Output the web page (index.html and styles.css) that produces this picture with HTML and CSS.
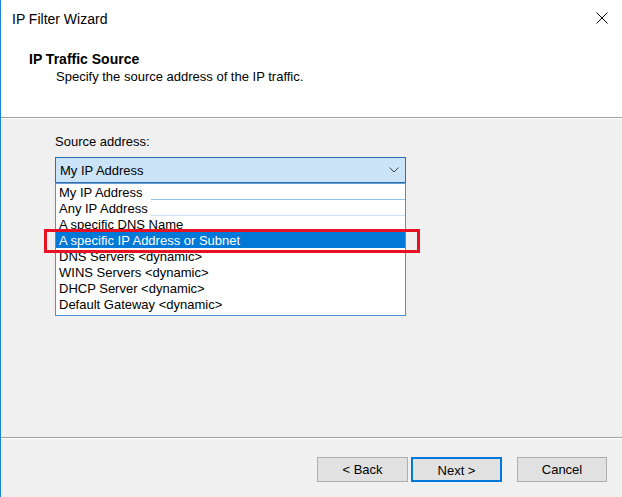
FILE: index.html
```html
<!DOCTYPE html>
<html lang="en">
<head>
<meta charset="utf-8">
<title>IP Filter Wizard</title>
<link rel="stylesheet" href="styles.css">
</head>
<body>
<div class="window">
  <header class="top">
    <div class="titlebar">
      <span class="title">IP Filter Wizard</span>
      <svg class="close" width="12" height="12" viewBox="0 0 12 12" aria-hidden="true">
        <path d="M0.5 0.5 L11.5 11.5 M11.5 0.5 L0.5 11.5" stroke="#000" stroke-width="1" fill="none"/>
      </svg>
    </div>
    <h1 class="heading">IP Traffic Source</h1>
    <p class="sub">Specify the source address of the IP traffic.</p>
  </header>
  <main class="content">
    <div class="label">Source address:</div>
    <div class="combo-wrap">
      <div class="combo">
        <span class="combo-text">My IP Address</span>
        <svg class="chevron" width="10" height="6" viewBox="0 0 10 6" aria-hidden="true">
          <path d="M0.5 0.5 L5 5 L9.5 0.5" stroke="#404040" stroke-width="1" fill="none"/>
        </svg>
      </div>
      <ul class="list">
        <li class="row line-a">My IP Address</li>
        <li class="row line-b">Any IP Address</li>
        <li class="row">A specific DNS Name</li>
        <li class="row selected">A specific IP Address or Subnet</li>
        <li class="row">DNS Servers &lt;dynamic&gt;</li>
        <li class="row">WINS Servers &lt;dynamic&gt;</li>
        <li class="row">DHCP Server &lt;dynamic&gt;</li>
        <li class="row">Default Gateway &lt;dynamic&gt;</li>
      </ul>
      <div class="callout"></div>
    </div>
  </main>
  <footer class="footer">
    <button class="btn btn-back">&lt; Back</button>
    <button class="btn btn-next">Next &gt;</button>
    <button class="btn btn-cancel">Cancel</button>
  </footer>
</div>
</body>
</html>
```
FILE: styles.css
```css
* { box-sizing: border-box; }

html, body {
  margin: 0;
  padding: 0;
  background: #f0f0f0;
}

body {
  font-family: "Liberation Sans", Arial, sans-serif;
  font-size: 13px;
  color: #000;
}

.window {
  width: 622px;
  height: 497px;
  border-left: 1px solid #1883d7;
  display: flex;
  flex-direction: column;
  background: #f0f0f0;
}

.top {
  height: 118px;
  background: #fff;
  border-bottom: 1px solid #a0a0a0;
  flex: none;
}

.titlebar {
  display: flex;
  justify-content: space-between;
  align-items: flex-start;
  padding: 10px 14px 0 11px;
  height: 28px;
}

.title {
  font-size: 14px;
  line-height: 18px;
}

.close {
  margin-top: 2px;
  display: block;
}

.heading {
  margin: 22px 0 0 28px;
  font-size: 14px;
  line-height: 18px;
  font-weight: bold;
}

.sub {
  margin: 1px 0 0 55px;
  font-size: 13px;
  line-height: 16px;
}

.content {
  flex: 1;
  border-top: 1px solid #fff;
  padding: 15px 0 0 54px;
}

.label {
  line-height: 16px;
}

.combo-wrap {
  position: relative;
  width: 351px;
  margin-top: 7px;
}

.combo {
  height: 26px;
  border: 1px solid #2f6db5;
  background: #cce4f7;
  display: flex;
  align-items: center;
  justify-content: space-between;
  padding: 0 6px 0 4px;
}

.combo-text {
  line-height: 16px;
  padding-top: 1px;
}

.chevron {
  display: block;
}

.list {
  list-style: none;
  margin: 0;
  padding: 0 0 3px 0;
  background: #fff;
  border: 1px solid #4f8fd6;
  border-top-color: #6a9bd0;
}

.row {
  position: relative;
  height: 16px;
  line-height: 16px;
  padding: 1px 0 0 3px;
  white-space: nowrap;
}

.row.selected {
  background: #0078d7;
  color: #fff;
}

.line-a::after,
.line-b::after {
  content: "";
  position: absolute;
  left: 95px;
  right: 0;
  bottom: 0;
  height: 1px;
}

.line-a::after { background: #8ec3f0; }
.line-b::after { background: #c8e0f8; }

.callout {
  position: absolute;
  left: -11px;
  top: 72px;
  width: 376px;
  height: 24px;
  border: 3px solid #e81123;
  pointer-events: none;
}

.footer {
  flex: none;
  height: 60px;
  border-top: 1px solid #a0a0a0;
  box-shadow: inset 0 1px 0 #fff;
  display: flex;
  justify-content: flex-end;
  align-items: flex-start;
  padding: 19px 15px 0 0;
}

.btn {
  font-family: "Liberation Sans", Arial, sans-serif;
  font-size: 13px;
  color: #000;
  height: 25px;
  width: 91px;
  background: #e1e1e1;
  border: 1px solid #adadad;
  padding: 0;
  line-height: 23px;
  margin: 0;
}

.btn-next {
  border: 2px solid #0078d7;
  margin-left: 3px;
}

.btn-cancel {
  width: 90px;
  margin-left: 15px;
}
```
